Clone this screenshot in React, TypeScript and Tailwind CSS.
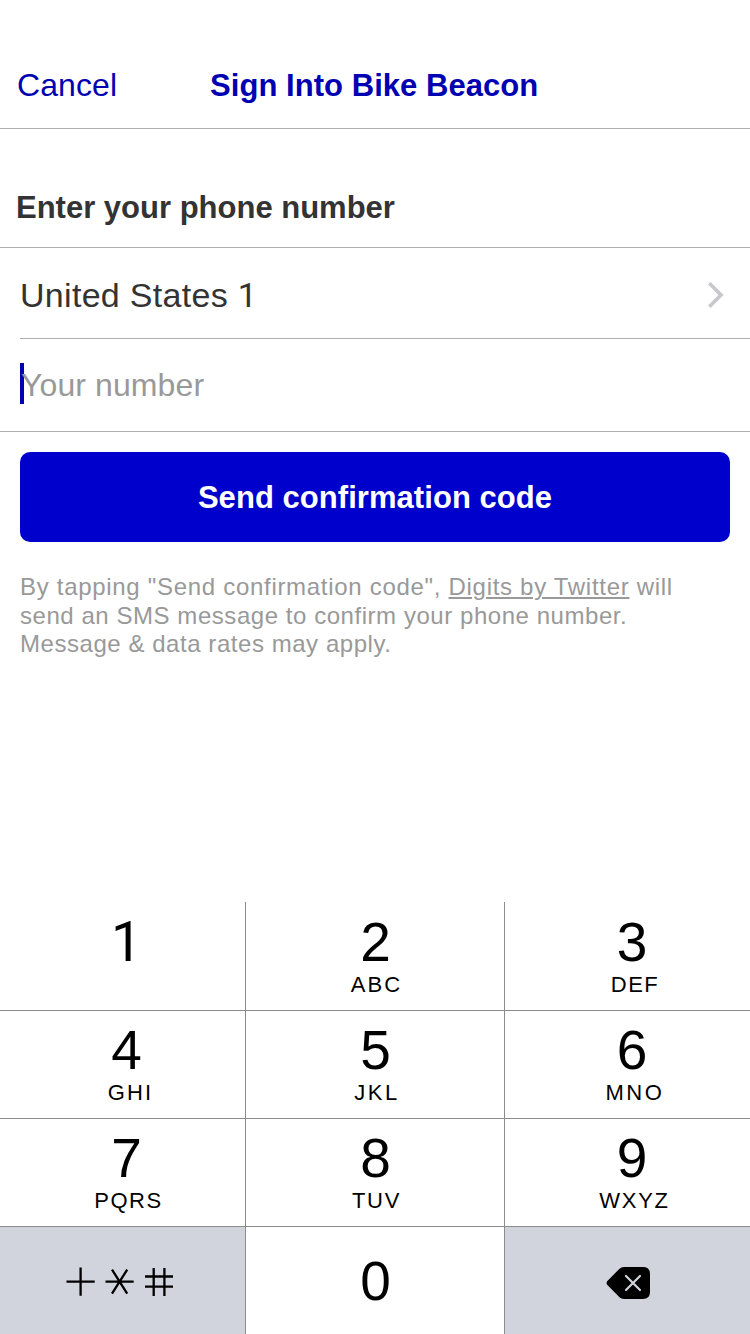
type KeyData = { digit: string; letters: string; tracking: string };

const rows: KeyData[][] = [
  [
    { digit: '1', letters: '', tracking: '' },
    { digit: '2', letters: 'ABC', tracking: 'tracking-[2.1px] pl-[2px]' },
    { digit: '3', letters: 'DEF', tracking: 'tracking-[1.5px] pl-[6px]' },
  ],
  [
    { digit: '4', letters: 'GHI', tracking: 'tracking-[2.1px] pl-[8px]' },
    { digit: '5', letters: 'JKL', tracking: 'tracking-[2.5px] pl-[3px]' },
    { digit: '6', letters: 'MNO', tracking: 'tracking-[2.6px] pl-[6px]' },
  ],
  [
    { digit: '7', letters: 'PQRS', tracking: 'tracking-[1.6px] pl-[4px]' },
    { digit: '8', letters: 'TUV', tracking: 'tracking-[1.7px] pl-[2px]' },
    { digit: '9', letters: 'WXYZ', tracking: 'tracking-[1.7px] pl-[5px]' },
  ],
];

const columnBorders = ['border-r pl-[8px]', 'border-r pl-[1px]', 'pl-[9px]'];
const rowPadding = ['pt-[10px]', 'pt-[9px]', 'pt-[9px]'];

function Key({ data, row, column }: { data: KeyData; row: number; column: number }) {
  const digitFont = data.digit === '1' ? 'font-[Roboto,sans-serif]' : '';
  return (
    <button
      className={`flex flex-col items-center border-[#8c8c8c] bg-white text-black ${rowPadding[row]} ${columnBorders[column]}`}
    >
      <span className={`h-[60px] text-[55px] leading-[60px] ${digitFont}`}>{data.digit}</span>
      <span className={`mt-[1px] text-[22px] leading-[24px] ${data.tracking}`}>{data.letters}</span>
    </button>
  );
}

function SymbolsIcon() {
  return (
    <svg width="108" height="30" viewBox="66 1267 108 30" fill="none" stroke="#000" strokeWidth="2.3">
      <path d="M66.5 1281.7H94.7M80.6 1267.5V1295.7" />
      <path d="M105.5 1281.7H133.7M112 1269.6L127.2 1293.6M127.2 1269.6L112 1293.6" />
      <path d="M153.7 1268V1296M164.4 1268V1296M145 1276.5H173M145 1286.6H173" />
    </svg>
  );
}

function BackspaceIcon() {
  return (
    <svg width="44" height="32" viewBox="0 0 44 32" fill="none">
      <path
        d="M18 0H37Q44 0 44 7V25Q44 32 37 32H18Q15.3 32 13.5 30.3L1.4 18Q-0.4 16 1.4 14L13.5 1.7Q15.3 0 18 0Z"
        fill="#000"
      />
      <path d="M20 9L34 23M34 9L20 23" stroke="#d1d4dc" strokeWidth="2.2" strokeLinecap="round" />
    </svg>
  );
}

export default function App() {
  return (
    <main className="flex h-[1334px] w-[750px] flex-col overflow-hidden bg-white font-['Liberation_Sans',Arial,sans-serif] text-[#333]">
      <header className="grid h-[129px] grid-cols-[210px_1fr] items-end border-b border-[#adadad] pb-[22px] text-[#0000b3]">
        <button className="pb-px pl-[17px] text-left text-[32px] leading-[40px] tracking-[0.1px]">Cancel</button>
        <h1 className="text-[31px] font-bold leading-[40px] tracking-[0.05px]">Sign Into Bike Beacon</h1>
      </header>

      <h2 className="h-[119px] border-b border-[#adadad] pl-[16px] pt-[59px] text-[31px] font-bold leading-[40px]">
        Enter your phone number
      </h2>

      <section className="flex h-[184px] flex-col border-b border-[#adadad] pl-[20px]">
        <button className="flex h-[91px] items-center justify-between border-b border-[#adadad] pr-[26px] pt-[4px] text-left">
          <span className="text-[34px] leading-[40px] tracking-[0.3px]">
            United States <span className="font-[Roboto,sans-serif]">1</span>
          </span>
          <svg width="16" height="26" viewBox="0 0 16 26" fill="none" stroke="#c7c7cc" strokeWidth="3.6">
            <path d="M1.3 1.3L13 13L1.3 24.7" />
          </svg>
        </button>
        <div className="flex h-[92px] items-start pt-[24px]">
          <span className="h-[41px] w-[4px] shrink-0 bg-[#0000b3]" />
          <span className="-ml-[3px] pt-[2px] text-[32px] leading-[40px] tracking-[0.1px] text-[#999]">
            Your number
          </span>
        </div>
      </section>

      <button className="mx-[20px] mt-[20px] h-[90px] shrink-0 rounded-[10px] bg-[#0000cc] pt-[2px] text-[31px] font-bold tracking-[0.05px] text-white">
        Send confirmation code
      </button>

      <p className="ml-[20px] mt-[31px] whitespace-nowrap text-[24px] leading-[28.6px] tracking-[0.55px] text-[#999]">
        <span className="tracking-[0.7px]">
          By tapping "Send confirmation code",{' '}
          <a className="underline decoration-[1.5px] underline-offset-[2px]">Digits by Twitter</a> will
        </span>
        <br />
        send an SMS message to confirm your phone number.
        <br />
        Message &amp; data rates may apply.
      </p>

      <div className="mt-auto grid h-[432px] grid-cols-[246px_259px_245px] grid-rows-[109px_108px_108px_107px]">
        {rows.map((row, r) =>
          row.map((data, c) => (
            <div key={data.digit} className="grid border-b border-[#8c8c8c]">
              <Key data={data} row={r} column={c} />
            </div>
          )),
        )}
        <button className="flex items-start border-r border-[#8c8c8c] bg-[#d1d4dc] pl-[66px] pt-[40px]">
          <SymbolsIcon />
        </button>
        <button className="flex items-start justify-center border-r border-[#8c8c8c] bg-white pl-[1px] pt-[24px] text-[55px] leading-[60px] text-black">
          0
        </button>
        <button className="flex items-start bg-[#d1d4dc] pl-[101px] pt-[40px]">
          <BackspaceIcon />
        </button>
      </div>
    </main>
  );
}
